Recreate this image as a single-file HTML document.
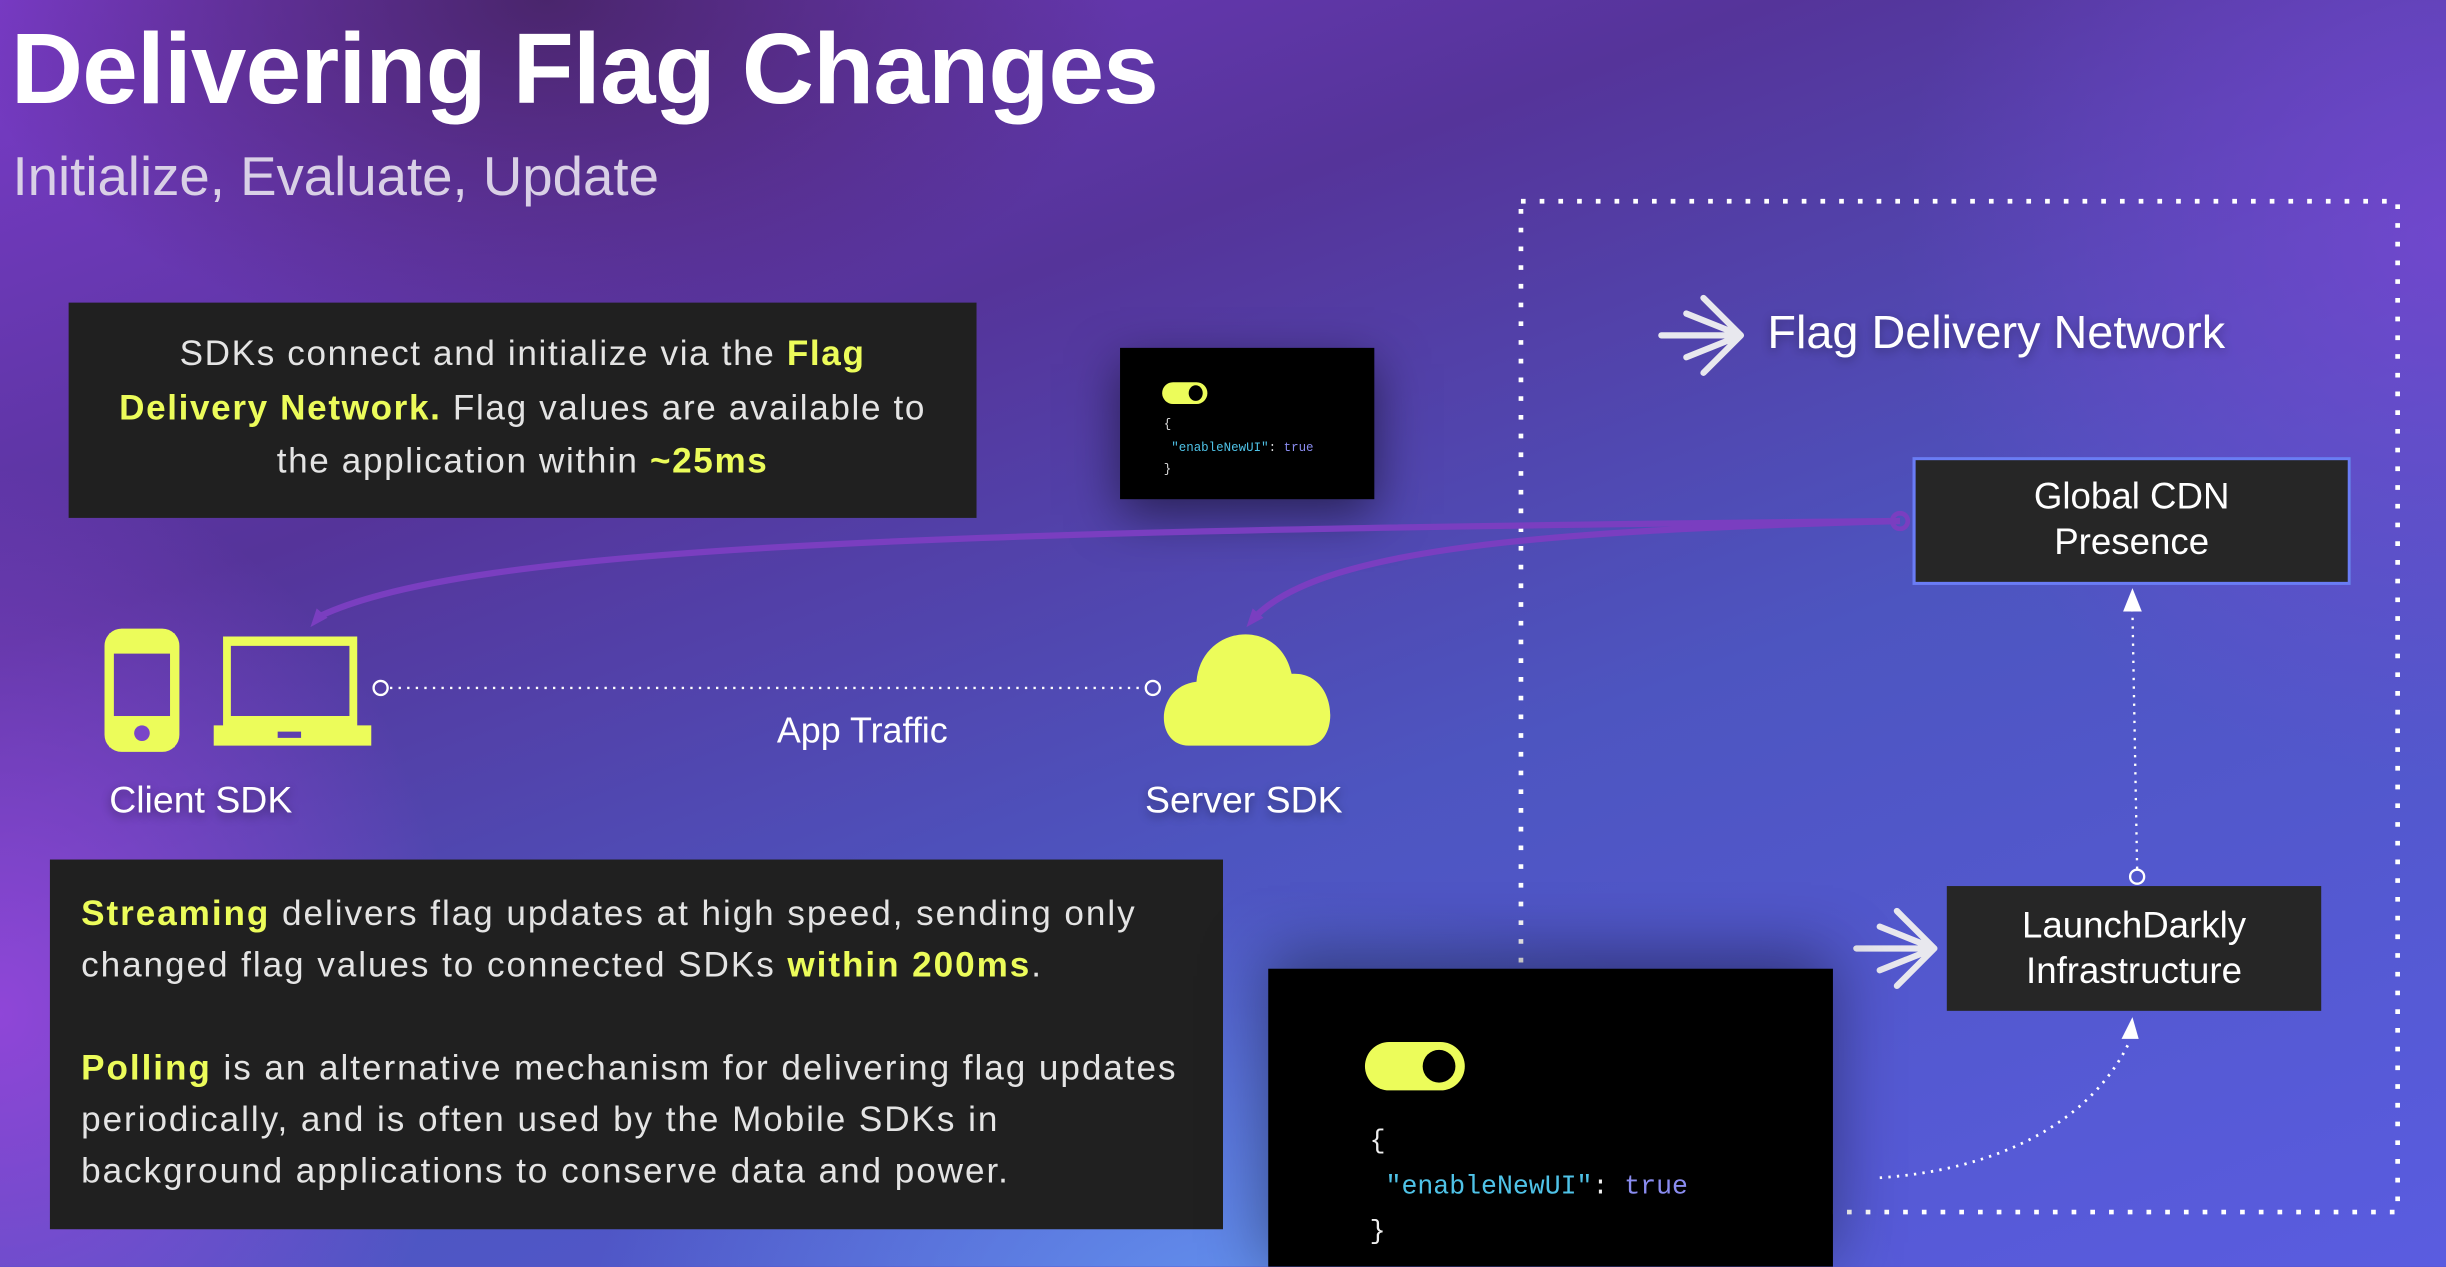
<!DOCTYPE html>
<html><head><meta charset="utf-8"><style>
html,body{margin:0;padding:0;width:2446px;height:1266px;overflow:hidden;background:#5a4fc8}
#s{position:absolute;left:0;top:0;width:1568px;height:812px;transform:scale(1.55995);transform-origin:0 0;overflow:hidden;
font-family:"Liberation Sans",sans-serif;color:#fff;
background:
radial-gradient(ellipse 420px 500px at 0px 650px,rgba(150,70,220,.9),rgba(150,70,220,0) 70%),
radial-gradient(ellipse 500px 300px at 350px 0px,rgba(70,35,100,.9),rgba(70,35,100,0) 75%),
radial-gradient(ellipse 600px 400px at 800px 850px,rgba(100,150,240,.95),rgba(100,150,240,0) 70%),
radial-gradient(ellipse 500px 500px at 1568px 150px,rgba(120,70,210,.8),rgba(120,70,210,0) 70%),
linear-gradient(160deg,#7a3bc8 0%,#55349a 30%,#4d55c0 60%,#5a5ce0 100%);}
.abs{position:absolute}
.box{position:absolute;background:#202020}
.y{color:#ecfc5a;font-weight:bold}
.mono{font-family:"Liberation Mono",monospace}
</style></head><body><div id="s">
<div class="abs" style="left:7px;top:7px;font-size:64px;font-weight:bold;letter-spacing:-0.5px;white-space:nowrap">Delivering Flag Changes</div>
<div class="abs" style="left:8px;top:94px;font-size:35px;color:#d9d0e6;white-space:nowrap">Initialize, Evaluate, Update</div>

<div class="box" style="left:44px;top:194px;width:582px;height:138px;"></div>
<div class="abs" style="left:44px;top:210px;width:582px;text-align:center;font-size:22.5px;line-height:34.5px;color:#e4e4e4;white-space:nowrap;letter-spacing:1.05px">SDKs connect and initialize via the <span class="y">Flag</span><br><span class="y">Delivery Network.</span> Flag values are available to<br>the application within <span class="y">~25ms</span></div>

<div class="box" style="left:718px;top:223px;width:163px;height:97px;background:#000;box-shadow:0 10px 30px rgba(0,0,0,.5)"></div>
<div class="abs" style="left:745px;top:245px;width:29px;height:14px;border-radius:7px;background:#ecfc5a"></div>
<div class="abs" style="left:762px;top:247px;width:9px;height:10px;border-radius:50%;background:#000"></div>
<div class="abs mono" style="left:746px;top:266px;font-size:8px;line-height:14.5px;color:#ddd;white-space:pre">{
 <span style="color:#4fc3e8">"enableNewUI"</span>: <span style="color:#8a8cf0">true</span>
}</div>

<svg class="abs" style="left:0;top:0" width="1568" height="812" viewBox="0 0 1568 812">
<rect x="975" y="129" width="562" height="648" fill="none" stroke="#fff" stroke-width="3" stroke-dasharray="3 9"/>
<path d="M205 395 C 300 350, 600 340, 1218 334" fill="none" stroke="#7a3ec0" stroke-width="4"/>
<path d="M805 395 C 850 350, 1000 340, 1218 334" fill="none" stroke="#7a3ec0" stroke-width="4"/>
<path d="M199 402 l4 -12 l7 6 z M799 402 l4 -12 l7 6 z" fill="#7a3ec0"/>
<circle cx="1218" cy="334" r="5" fill="none" stroke="#7a3ec0" stroke-width="3"/>
<line x1="250" y1="441" x2="734" y2="441" stroke="#fff" stroke-width="1.5" stroke-dasharray="1.5 4"/>
<circle cx="244" cy="441" r="4.5" fill="none" stroke="#fff" stroke-width="1.5"/>
<circle cx="739" cy="441" r="4.5" fill="none" stroke="#fff" stroke-width="1.5"/>
<line x1="1370" y1="557" x2="1367" y2="392" stroke="#fff" stroke-width="1.5" stroke-dasharray="1.5 4"/>
<circle cx="1370" cy="562" r="4.5" fill="none" stroke="#fff" stroke-width="1.5"/>
<path d="M1367 377 l-6 15 h12 z" fill="#fff"/>
<path d="M1205 755 C 1280 750, 1340 720, 1365 668" fill="none" stroke="#fff" stroke-width="1.8" stroke-dasharray="1.5 4"/>
<path d="M1367 652 l-7 14 h11 z" fill="#fff"/>
<g fill="none" stroke="#e8e8ee" stroke-width="4" stroke-linecap="round" stroke-linejoin="round">
<path d="M1190 608 L1240 608 M1240 608 L1216 584 M1240 608 L1216 632 M1240 608 L1205 594 M1240 608 L1205 622"/>
<path d="M1065 215 L1116 215 M1116 215 L1092 191 M1116 215 L1092 239 M1116 215 L1081 201 M1116 215 L1081 229"/>
</g>
<rect x="70" y="406" width="42" height="73" rx="8" fill="none" stroke="#ecfc5a" stroke-width="6"/>
<rect x="70" y="406" width="42" height="13" fill="#ecfc5a"/>
<rect x="70" y="459" width="42" height="20" fill="#ecfc5a"/>
<circle cx="91" cy="470" r="5" fill="#7a45c8"/>
<path d="M143 408 h86 v57 h9 v13 h-101 v-13 h6 z M148 414 v45 h76 v-45 z M178 469 v4 h15 v-4 z" fill="#ecfc5a" fill-rule="evenodd"/>
<path d="M762 478 C 740 478 740 440 767 437 C 770 400 820 395 828 432 C 858 430 860 478 838 478 Z" fill="#ecfc5a"/>
</svg>

<div class="abs" style="left:498px;top:455px;font-size:23px">App Traffic</div>
<div class="abs" style="left:70px;top:500px;font-size:24px;text-shadow:0 2px 6px rgba(0,0,0,.4)">Client SDK</div>
<div class="abs" style="left:734px;top:500px;font-size:24px;text-shadow:0 2px 6px rgba(0,0,0,.4)">Server SDK</div>
<div class="abs" style="left:1133px;top:197px;font-size:30px;text-shadow:0 2px 6px rgba(0,0,0,.3)">Flag Delivery Network</div>

<div class="box" style="left:1226px;top:293px;width:277px;height:78px;background:#262626;border:2px solid #6a7cf5"></div>
<div class="abs" style="left:1228px;top:304px;width:277px;text-align:center;font-size:23.5px;line-height:28.5px">Global CDN<br>Presence</div>
<div class="box" style="left:1248px;top:568px;width:240px;height:80px;background:#262626"></div>
<div class="abs" style="left:1248px;top:579px;width:240px;text-align:center;font-size:23.5px;line-height:28.5px">LaunchDarkly<br>Infrastructure</div>

<div class="box" style="left:32px;top:551px;width:752px;height:237px;"></div>
<div class="abs" style="left:52px;top:569px;font-size:22.5px;line-height:33px;color:#e4e4e4;white-space:nowrap;letter-spacing:1.25px"><span class="y">Streaming</span> delivers flag updates at high speed, sending only<br>changed flag values to connected SDKs <span class="y">within 200ms</span>.<br><br><span class="y">Polling</span> is an alternative mechanism for delivering flag updates<br>periodically, and is often used by the Mobile SDKs in<br>background applications to conserve data and power.</div>

<div class="box" style="left:813px;top:621px;width:362px;height:200px;background:#000;box-shadow:0 -10px 40px rgba(0,0,0,.4)"></div>
<div class="abs" style="left:875px;top:668px;width:64px;height:31px;border-radius:16px;background:#ecfc5a"></div>
<div class="abs" style="left:912px;top:673px;width:21px;height:21px;border-radius:50%;background:#000"></div>
<div class="abs mono" style="left:878px;top:718px;font-size:17px;line-height:29px;color:#eee;white-space:pre">{
 <span style="color:#4fc3e8">"enableNewUI"</span>: <span style="color:#8a8cf0">true</span>
}</div>
</div></body></html>
